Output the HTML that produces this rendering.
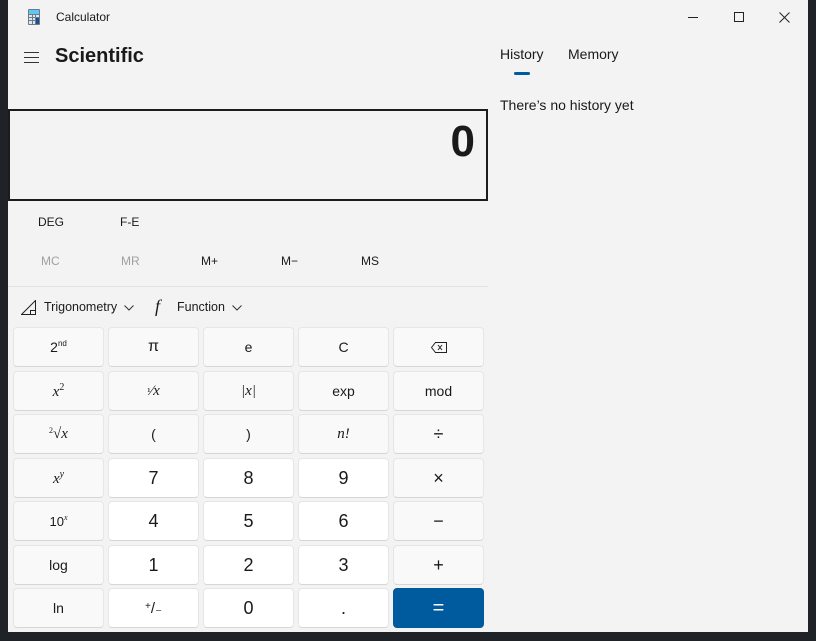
<!DOCTYPE html>
<html><head><meta charset="utf-8"><style>
*{box-sizing:border-box;margin:0;padding:0}
body{width:816px;height:641px;background:#1f2226;position:relative;overflow:hidden;font-family:"Segoe UI","Liberation Sans",sans-serif;color:#1a1a1a}
.win{position:absolute;left:8px;top:0;width:800px;height:632px;background:#f3f3f3}
.t{position:absolute;white-space:nowrap}
.disp{position:absolute;left:8px;top:109px;width:480px;height:92px;border:2px solid #1c1c1c;background:#f3f3f3}
.b{position:absolute;width:91px;height:40px;border:1px solid #e6e6e6;border-bottom-color:#d6d6d6;border-radius:4px;background:#f9f9f9;display:flex;align-items:center;justify-content:center;font-size:14px;color:#1a1a1a}
.b>span{white-space:nowrap}
.n{background:#fff;font-size:18px}
.eq{background:#005a9e;border-color:#005a9e;color:#fff;font-size:20px}
.i{font-family:"Liberation Serif",serif;font-style:italic;font-size:15px}
sup{font-size:8px;vertical-align:6px}
.m{font-size:13px}
</style></head><body>
<div class="win">
  <svg class="t" style="left:20px;top:9px" width="12" height="16" viewBox="0 0 12 16">
    <rect x="0" y="0" width="12" height="16" rx="1" fill="#6a7b8c"/>
    <rect x="1" y="1" width="10" height="4" fill="#5fc7f0"/>
    <g fill="#dfe6ec"><rect x="1" y="6" width="3" height="2"/><rect x="5" y="6" width="2" height="2"/><rect x="8" y="6" width="3" height="2"/><rect x="1" y="9" width="3" height="2"/><rect x="5" y="9" width="2" height="2"/><rect x="1" y="12" width="3" height="3"/><rect x="5" y="12" width="2" height="3"/></g>
    <rect x="8" y="9" width="3" height="6" fill="#1f4f8c"/>
  </svg>
  <div class="t" style="left:48px;top:10px;font-size:12px">Calculator</div>
  <div class="t" style="left:680px;top:17px;width:10px;height:1px;background:#222"></div>
  <div class="t" style="left:726px;top:12px;width:10px;height:10px;border:1px solid #222"></div>
  <svg class="t" style="left:771px;top:12px" width="11" height="11"><path d="M0.5 0.5L10.5 10.5M10.5 0.5L0.5 10.5" stroke="#222" stroke-width="1"/></svg>
  <div class="t" style="left:16px;top:52px;width:15px;height:1px;background:#333;box-shadow:0 5px 0 #333,0 10px 0 #333"></div>
  <div class="t" style="left:47px;top:45px;font-size:20px;font-weight:600">Scientific</div>
  <div class="t" style="left:492px;top:46px;font-size:14px">History</div>
  <div class="t" style="left:560px;top:46px;font-size:14px">Memory</div>
  <div class="t" style="left:506px;top:72px;width:16px;height:3px;border-radius:2px;background:#005a9e"></div>
  <div class="t" style="left:492px;top:97px;font-size:14px">There’s no history yet</div>
</div>
<div class="disp"><div class="t" style="right:11px;top:6px;font-size:44px;font-weight:600">0</div></div>
<div class="t" style="left:38px;top:215px;font-size:12px">DEG</div>
<div class="t" style="left:120px;top:215px;font-size:12px">F-E</div>
<div class="t m" style="left:41px;top:254px;font-size:12px;color:#a0a0a0">MC</div>
<div class="t m" style="left:121px;top:254px;font-size:12px;color:#a0a0a0">MR</div>
<div class="t m" style="left:201px;top:254px;font-size:12px">M+</div>
<div class="t m" style="left:281px;top:254px;font-size:12px">M−</div>
<div class="t m" style="left:361px;top:254px;font-size:12px">MS</div>
<div class="t" style="left:8px;top:286px;width:480px;height:1px;background:#e3e3e3"></div>
<svg class="t" style="left:21px;top:300px" width="15" height="15"><path d="M0.5 14.5L14.5 0.5V14.5Z M9.5 14.5V10.5H14.5" fill="none" stroke="#222" stroke-width="1"/></svg>
<div class="t" style="left:44px;top:300px;font-size:12.5px">Trigonometry</div>
<svg class="t" style="left:124px;top:305px" width="10" height="6"><path d="M0.5 0.5L5 5L9.5 0.5" fill="none" stroke="#333"/></svg>
<div class="t" style="left:155px;top:296px;font-family:'Liberation Serif',serif;font-style:italic;font-size:18px">f</div>
<div class="t" style="left:177px;top:300px;font-size:12.5px">Function</div>
<svg class="t" style="left:232px;top:305px" width="10" height="6"><path d="M0.5 0.5L5 5L9.5 0.5" fill="none" stroke="#333"/></svg>

<div class="b" style="left:13px;top:327px"><span>2<sup>nd</sup></span></div>
<div class="b" style="left:108px;top:327px;font-size:16px">π</div>
<div class="b" style="left:203px;top:327px">e</div>
<div class="b" style="left:298px;top:327px">C</div>
<div class="b" style="left:393px;top:327px"><svg width="16" height="11"><path d="M4.5 0.5H15.5V10.5H4.5L0.5 5.5Z M7 3L11 8M11 3L7 8" fill="none" stroke="#222"/></svg></div>

<div class="b i" style="left:13px;top:371px"><span>x<sup style="font-style:normal;font-size:10px">2</sup></span></div>
<div class="b i" style="left:108px;top:371px"><span><span style="font-style:normal;font-size:11px">¹</span>⁄x</span></div>
<div class="b i" style="left:203px;top:371px">|x|</div>
<div class="b" style="left:298px;top:371px">exp</div>
<div class="b" style="left:393px;top:371px">mod</div>

<div class="b i" style="left:13px;top:414px"><span><span style="font-style:normal;font-size:8px;vertical-align:5px">2</span>√x</span></div>
<div class="b" style="left:108px;top:414px">(</div>
<div class="b" style="left:203px;top:414px">)</div>
<div class="b i" style="left:298px;top:414px">n!</div>
<div class="b" style="left:393px;top:414px;font-size:18px">÷</div>

<div class="b i" style="left:13px;top:458px"><span>x<sup style="font-size:10px">y</sup></span></div>
<div class="b n" style="left:108px;top:458px">7</div>
<div class="b n" style="left:203px;top:458px">8</div>
<div class="b n" style="left:298px;top:458px">9</div>
<div class="b" style="left:393px;top:458px;font-size:18px">×</div>

<div class="b" style="left:13px;top:501px;font-size:13px"><span>10<sup style="font-family:'Liberation Serif',serif;font-style:italic">x</sup></span></div>
<div class="b n" style="left:108px;top:501px">4</div>
<div class="b n" style="left:203px;top:501px">5</div>
<div class="b n" style="left:298px;top:501px">6</div>
<div class="b" style="left:393px;top:501px;font-size:18px">−</div>

<div class="b" style="left:13px;top:545px">log</div>
<div class="b n" style="left:108px;top:545px">1</div>
<div class="b n" style="left:203px;top:545px">2</div>
<div class="b n" style="left:298px;top:545px">3</div>
<div class="b" style="left:393px;top:545px;font-size:18px">+</div>

<div class="b" style="left:13px;top:588px">ln</div>
<div class="b n" style="left:108px;top:588px;font-size:15px"><span><sup style="font-size:10px;vertical-align:4px">+</sup>/<span style="font-size:13px">₋</span></span></div>
<div class="b n" style="left:203px;top:588px">0</div>
<div class="b n" style="left:298px;top:588px">.</div>
<div class="b eq" style="left:393px;top:588px">=</div>
</body></html>
